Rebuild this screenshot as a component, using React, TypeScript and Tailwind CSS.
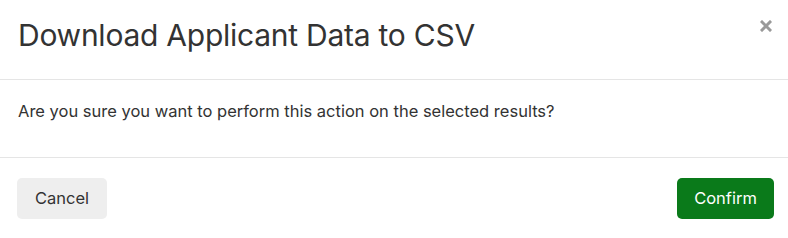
export default function App() {
  return (
    <div className="w-[788px] h-[238px] bg-white text-[#333] font-['Inter',Arial,sans-serif]">
      <div className="h-[80px] border-b border-[#e5e5e5] flex items-start justify-between pl-[18px] pr-[16px]">
        <h2 className="text-[30px] leading-none mt-[20px] font-normal tracking-[-0.25px]">
          Download Applicant Data to CSV
        </h2>
        <button className="mt-[20px] w-[12px] h-[12px] flex items-center justify-center">
          <svg width="12" height="12" viewBox="0 0 12 12">
            <path d="M2 2L10 10M10 2L2 10" stroke="#999" strokeWidth="3" strokeLinecap="square" />
          </svg>
        </button>
      </div>
      <div className="h-[78px] border-b border-[#e5e5e5] pl-[18px] flex items-start">
        <p className="text-[16.5px] leading-none mt-[23px]">
          Are you sure you want to perform this action on the selected results?
        </p>
      </div>
      <div className="flex justify-between items-start pl-[17px] pr-[14px] pt-[20px]">
        <button className="w-[90px] h-[41px] rounded-[5px] bg-[#eeeeee] text-[16.5px] text-[#333]">
          Cancel
        </button>
        <button className="w-[97px] h-[41px] rounded-[5px] bg-[#0a7a1a] text-[16.5px] text-white">
          Confirm
        </button>
      </div>
    </div>
  )
}
